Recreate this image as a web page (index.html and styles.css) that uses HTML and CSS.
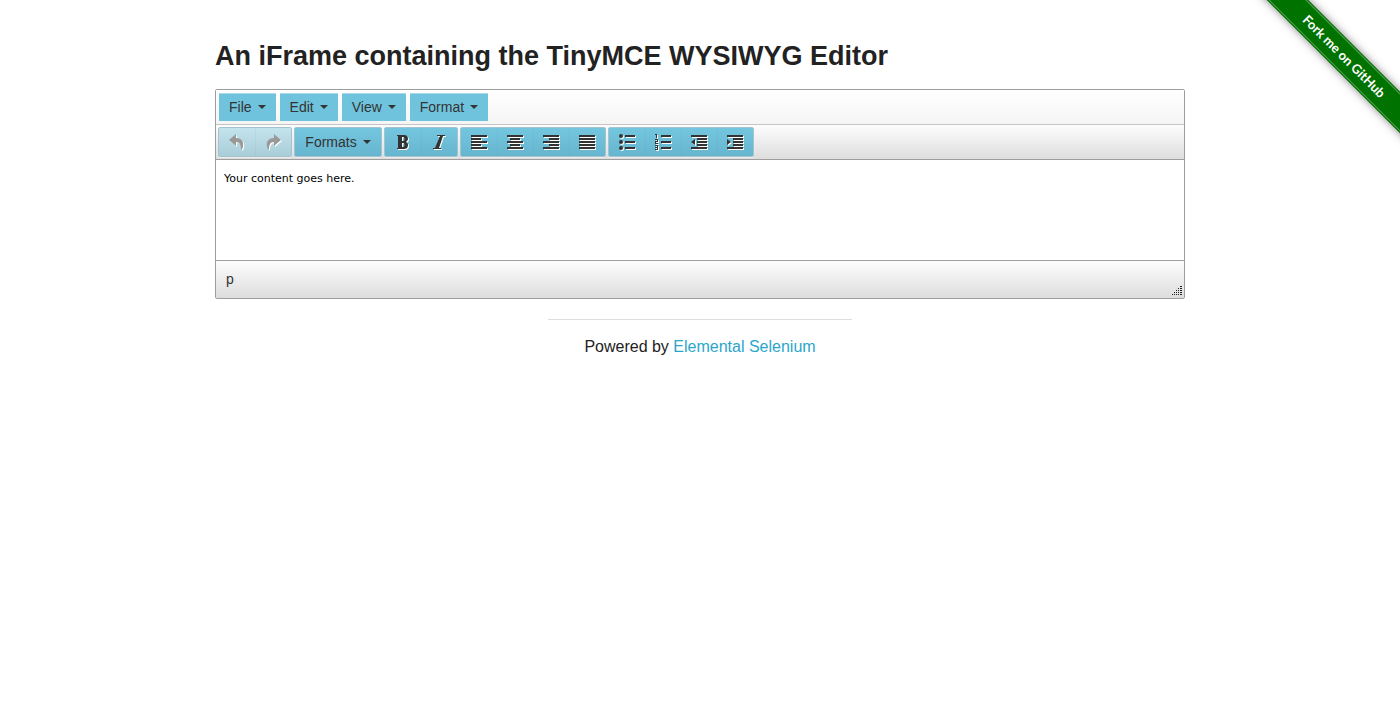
FILE: index.html
```html
<!DOCTYPE html>
<html lang="en">
<head>
<meta charset="utf-8">
<title>The Internet</title>
<link rel="stylesheet" href="styles.css">
</head>
<body>
<div class="ribbon"><a class="ribbon-link" href="#">Fork me on GitHub</a></div>
<main class="page">
  <h3 class="title">An iFrame containing the TinyMCE WYSIWYG Editor</h3>
  <div class="editor">
    <div class="menubar">
      <button class="menu-btn">File<i class="caret"></i></button>
      <button class="menu-btn">Edit<i class="caret"></i></button>
      <button class="menu-btn">View<i class="caret"></i></button>
      <button class="menu-btn">Format<i class="caret"></i></button>
    </div>
    <div class="toolbar">
      <div class="group group-disabled">
        <button class="tool" aria-label="Undo" disabled><svg class="icon" viewBox="0 0 16 16"><path d="M0 6L7 0V4C12 4 15 7 14 12C14 14 13 15 12 16C12 11 11 8 7 8V12Z"/></svg></button>
        <button class="tool" aria-label="Redo" disabled><svg class="icon" viewBox="0 0 16 16"><path d="M16 6L9 0V4C4 4 1 7 2 12C2 14 3 15 4 16C4 11 5 8 9 8V12Z"/></svg></button>
      </div>
      <div class="group"><button class="tool tool-text">Formats<i class="caret"></i></button></div>
      <div class="group">
        <button class="tool" aria-label="Bold"><svg class="icon" viewBox="0 0 16 16"><path fill-rule="evenodd" d="M2 1H9C12 1 13 3 13 5C13 6 12 7 11 8C13 9 13 10 13 11C13 14 11 15 9 15H2V14H3V2H2ZM7 3V7H8C10 7 10 3 8 3ZM7 9V13H8C10 13 10 9 8 9Z"/></svg></button>
        <button class="tool" aria-label="Italic"><svg class="icon" viewBox="0 0 16 16"><path d="M6 1H14V2H12L8 14H10V15H2V14H4L9 2H6Z"/></svg></button>
      </div>
      <div class="group">
        <button class="tool" aria-label="Align left"><svg class="icon" viewBox="0 0 16 16"><path d="M0 1H16V3H0ZM0 4H10V6H0ZM0 7H16V9H0ZM0 10H10V12H0ZM0 13H16V15H0Z"/></svg></button>
        <button class="tool" aria-label="Align center"><svg class="icon" viewBox="0 0 16 16"><path d="M0 1H16V3H0ZM3 4H13V6H3ZM0 7H16V9H0ZM3 10H13V12H3ZM0 13H16V15H0Z"/></svg></button>
        <button class="tool" aria-label="Align right"><svg class="icon" viewBox="0 0 16 16"><path d="M0 1H16V3H0ZM6 4H16V6H6ZM0 7H16V9H0ZM6 10H16V12H6ZM0 13H16V15H0Z"/></svg></button>
        <button class="tool" aria-label="Justify"><svg class="icon" viewBox="0 0 16 16"><path d="M0 1H16V3H0ZM0 4H16V6H0ZM0 7H16V9H0ZM0 10H16V12H0ZM0 13H16V15H0Z"/></svg></button>
      </div>
      <div class="group">
        <button class="tool" aria-label="Bullet list"><svg class="icon" viewBox="0 0 16 16"><path d="M6 1H16V3H6ZM6 7H16V9H6ZM6 13H16V15H6Z"/><circle cx="2" cy="2" r="2"/><circle cx="2" cy="8" r="2"/><circle cx="2" cy="14" r="2"/></svg></button>
        <button class="tool" aria-label="Numbered list"><svg class="icon" viewBox="0 0 16 16"><path d="M6 1H16V3H6ZM6 7H16V9H6ZM6 13H16V15H6ZM0 0H2V4H1V1H0ZM0 5H3V8H1V9H3V10H0V7H2V6H0ZM0 11H3V16H0V15H2V14H0V13H2V12H0Z"/></svg></button>
        <button class="tool" aria-label="Decrease indent"><svg class="icon" viewBox="0 0 16 16"><path d="M0 1H16V3H0ZM6 4H16V6H6ZM6 7H16V9H6ZM6 10H16V12H6ZM0 13H16V15H0ZM4 5V11L0 8Z"/></svg></button>
        <button class="tool" aria-label="Increase indent"><svg class="icon" viewBox="0 0 16 16"><path d="M0 1H16V3H0ZM6 4H16V6H6ZM6 7H16V9H6ZM6 10H16V12H6ZM0 13H16V15H0ZM0 5V11L4 8Z"/></svg></button>
      </div>
    </div>
    <div class="content" contenteditable="true" role="textbox" aria-label="Rich text area"><p class="content-text">Your content goes here.</p></div>
    <div class="statusbar">
      <span class="path">p</span>
      <svg class="grip" viewBox="0 0 10 10"><path d="M8 0h2v1H8zM6 2h1v1H6zM8 2h2v1H8zM4 4h1v1H4zM6 4h1v1H6zM8 4h2v1H8zM2 6h1v1H2zM4 6h1v1H4zM6 6h1v1H6zM8 6h2v1H8zM0 8h1v1H0zM2 8h1v1H2zM4 8h1v1H4zM6 8h1v1H6zM8 8h2v1H8z"/></svg>
    </div>
  </div>
</main>
<footer class="footer">
  <hr class="rule">
  <div>Powered by <a class="footer-link" href="#">Elemental Selenium</a></div>
</footer>
</body>
</html>
```
FILE: styles.css
```css
* { box-sizing: border-box; }
body {
  margin: 0;
  background: #fff;
  color: #222;
  font: 16px/24px "Liberation Sans", Arial, sans-serif;
}
.page {
  max-width: 1000px;
  margin: 0 auto;
  padding: 37px 15px 0;
}
.title {
  margin: 0 0 14px;
  font-size: 27px;
  line-height: 38px;
  font-weight: bold;
}
.editor {
  border: 1px solid #9e9e9e;
  border-radius: 2px;
}
.menubar {
  display: flex;
  gap: 4px;
  padding: 3px;
  border-bottom: 1px solid #c4c4c4;
  background: linear-gradient(#fff, #f5f5f5);
}
button {
  margin: 0;
  border: 0;
  color: #333;
  font: 14px/20px "Liberation Sans", Arial, sans-serif;
}
.menu-btn {
  height: 28px;
  padding: 0 10px 1px;
  border-top: 1px solid #a9d9e9;
  background: #70c3dc;
}
.caret {
  display: inline-block;
  margin-left: 6px;
  border: 4px solid transparent;
  border-top-color: #333;
  border-bottom: 0;
  vertical-align: 3px;
}
.toolbar {
  display: flex;
  flex-wrap: wrap;
  gap: 2px;
  padding: 2px;
  border-bottom: 1px solid #9e9e9e;
  background: linear-gradient(#fdfdfd, #ddd);
}
.group {
  display: flex;
  border: 1px solid #a3c4cf;
  border-radius: 2px;
  background: linear-gradient(#74c6df, #67b5cf);
  box-shadow: 0 1px 1px rgba(255, 255, 255, .5);
}
.group-disabled {
  background: linear-gradient(#c4e3ec, #a9ced9);
}
.tool {
  display: flex;
  align-items: center;
  justify-content: center;
  width: 36px;
  height: 28px;
  padding: 0;
  background: none;
}
.tool + .tool { box-shadow: inset 1px 0 rgba(60, 140, 165, .08); }
.tool-text {
  width: auto;
  min-width: 86px;
  padding: 0 10px;
}
.icon {
  width: 16px;
  height: 16px;
  fill: #333;
  overflow: visible;
  filter: drop-shadow(1px 1px 0 #fff);
}
.group-disabled .icon { fill: #999; }
.content {
  min-height: 100px;
  padding: 8px;
  color: #000;
  font: 11px/22px "DejaVu Sans", Verdana, sans-serif;
}
.content-text { margin: 0; }
.statusbar {
  display: flex;
  align-items: flex-end;
  justify-content: space-between;
  padding: 8px 2px 2px 10px;
  border-top: 1px solid #9e9e9e;
  background: linear-gradient(#fdfdfd, #ddd);
}
.path {
  margin-bottom: 7px;
  color: #333;
  font-size: 14px;
  line-height: 20px;
}
.grip {
  width: 10px;
  height: 10px;
  fill: #222;
}
.footer {
  margin-top: 20px;
  text-align: center;
}
.rule {
  width: 304px;
  margin: 0 auto 15px;
  border: 0;
  border-top: 1px solid #ddd;
}
.footer-link {
  color: #2ba6cb;
  text-decoration: none;
}
.ribbon {
  position: absolute;
  top: 0;
  right: 0;
  width: 149px;
  height: 149px;
  overflow: hidden;
}
.ribbon-link {
  position: absolute;
  top: 42px;
  left: -17px;
  width: 220px;
  padding: 1px 0;
  border: 1px solid #007200;
  outline: 1px solid #5aa65a;
  outline-offset: -2px;
  background: #007200;
  box-shadow: 0 0 8px rgba(0, 0, 0, .5);
  color: #fff;
  font: bold 13px/25px Lato, sans-serif;
  text-align: center;
  text-decoration: none;
  transform: rotate(45deg);
}
```
